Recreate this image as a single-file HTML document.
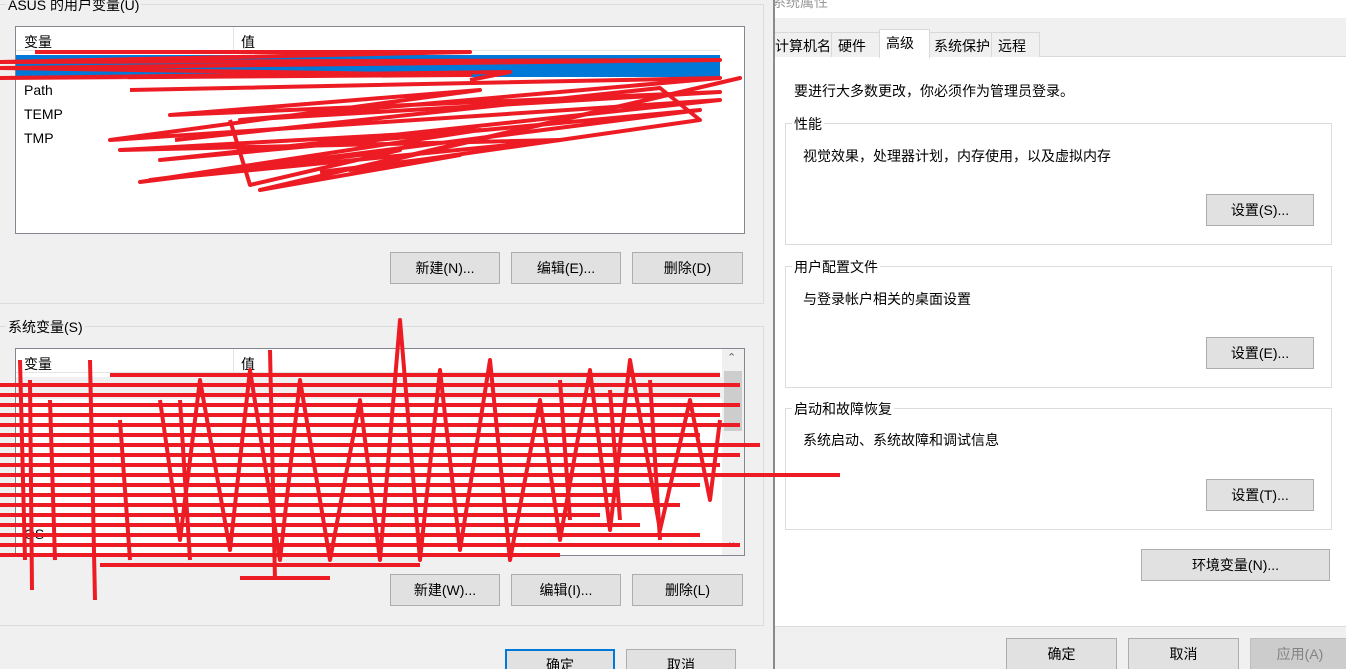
<!DOCTYPE html>
<html style="overflow:hidden"><head><meta charset="utf-8"><style>
*{margin:0;padding:0;box-sizing:border-box}
html,body{width:1346px;height:669px;overflow:hidden}
body{background:#f0f0f0;position:relative;font-family:"Liberation Sans","Noto Sans CJK SC",sans-serif;font-size:14px;color:#000}
.a{position:absolute}
.btn{position:absolute;background:#e1e1e1;border:1px solid #adadad;text-align:center;font-size:14px;line-height:30px;height:32px}
.grp{position:absolute;border:1px solid #dcdcdc}
.lbl{position:absolute;background:inherit;padding:0 2px;font-size:14px;line-height:16px}
.list{position:absolute;background:#fff;border:1px solid #828790}
.t{position:absolute;font-size:14px;white-space:nowrap}
</style></head><body>
<div class="a" style="left:0;top:0;width:774px;height:669px;background:#f0f0f0"></div>
<div class="grp" style="left:-2px;top:4px;width:766px;height:300px"></div>
<div class="lbl" style="left:6px;top:-3px;background:#f0f0f0">ASUS 的用户变量(U)</div>
<div class="list" style="left:15px;top:26px;width:730px;height:208px">
 <div class="a" style="left:0;top:0;width:704px;height:24px;border-bottom:1px solid #e5e5e5"></div>
 <div class="a" style="left:217px;top:0;width:1px;height:24px;background:#e5e5e5"></div>
 <div class="t" style="left:8px;top:5px">变量</div><div class="t" style="left:225px;top:5px">值</div>
 <div class="a" style="left:0;top:28px;width:704px;height:22px;background:#0078d7"></div>
 <div class="t" style="left:8px;top:55px">Path</div>
 <div class="t" style="left:8px;top:79px">TEMP</div>
 <div class="t" style="left:8px;top:103px">TMP</div>
</div>
<div class="btn" style="left:390px;top:252px;width:110px">新建(N)...</div>
<div class="btn" style="left:511px;top:252px;width:110px">编辑(E)...</div>
<div class="btn" style="left:632px;top:252px;width:111px">删除(D)</div>

<div class="grp" style="left:-2px;top:326px;width:766px;height:300px"></div>
<div class="lbl" style="left:6px;top:319px;background:#f0f0f0">系统变量(S)</div>
<div class="list" style="left:15px;top:348px;width:730px;height:208px;overflow:hidden">
 <div class="a" style="left:0;top:0;width:704px;height:24px;border-bottom:1px solid #e5e5e5"></div>
 <div class="a" style="left:217px;top:0;width:1px;height:24px;background:#e5e5e5"></div>
 <div class="t" style="left:8px;top:5px">变量</div><div class="t" style="left:225px;top:5px">值</div>
 <div class="a" style="left:0;top:28px;width:706px;height:22px;background:#f0f0f0"></div>
 <div class="t" style="left:8px;top:177px">OS</div>
 <div class="a" style="left:706px;top:0;width:22px;height:206px;background:#f0f0f0"></div>
 <div class="a" style="left:708px;top:22px;width:18px;height:60px;background:#cdcdcd"></div>
 <div class="t" style="left:711px;top:2px;font-size:11px;color:#606060">⌃</div>
 <div class="t" style="left:711px;top:186px;font-size:11px;color:#606060">⌄</div>
</div>
<div class="btn" style="left:390px;top:574px;width:110px">新建(W)...</div>
<div class="btn" style="left:511px;top:574px;width:110px">编辑(I)...</div>
<div class="btn" style="left:632px;top:574px;width:111px">删除(L)</div>
<div class="btn" style="left:505px;top:649px;width:110px;border:2px solid #0078d7;line-height:28px;height:32px">确定</div>
<div class="btn" style="left:626px;top:649px;width:110px">取消</div>

<div class="a" style="left:773px;top:0;width:2px;height:669px;background:#8a8a8a"></div>
<div class="a" style="left:775px;top:0;width:571px;height:18px;background:#fff"></div>
<div class="t" style="left:772px;top:-8px;color:#999">系统属性</div>
<div class="a" style="left:775px;top:18px;width:571px;height:38px;background:#f0f0f0"></div>
<div class="a" style="left:775px;top:56px;width:571px;height:570px;background:#fff;border-top:1px solid #d9d9d9"></div>
<div class="a" style="left:775px;top:32px;width:57px;height:25px;border:1px solid #d9d9d9;border-left:none;border-bottom:none;background:#f0f0f0"></div>
<div class="t" style="left:775px;top:36px">计算机名</div>
<div class="a" style="left:832px;top:32px;width:48px;height:25px;border-right:1px solid #d9d9d9;border-top:1px solid #d9d9d9;background:#f0f0f0"></div>
<div class="t" style="left:838px;top:36px">硬件</div>
<div class="a" style="left:879px;top:29px;width:51px;height:29px;border:1px solid #d9d9d9;border-bottom:none;background:#fff"></div>
<div class="t" style="left:886px;top:33px">高级</div>
<div class="a" style="left:930px;top:32px;width:62px;height:25px;border-right:1px solid #d9d9d9;border-top:1px solid #d9d9d9;background:#f0f0f0"></div>
<div class="t" style="left:934px;top:36px">系统保护</div>
<div class="a" style="left:992px;top:32px;width:48px;height:25px;border-right:1px solid #d9d9d9;border-top:1px solid #d9d9d9;background:#f0f0f0"></div>
<div class="t" style="left:998px;top:36px">远程</div>

<div class="t" style="left:794px;top:81px">要进行大多数更改，你必须作为管理员登录。</div>
<div class="grp" style="left:785px;top:123px;width:547px;height:122px"></div>
<div class="lbl" style="left:792px;top:116px;background:#fff">性能</div>
<div class="t" style="left:803px;top:146px">视觉效果，处理器计划，内存使用，以及虚拟内存</div>
<div class="btn" style="left:1206px;top:194px;width:108px">设置(S)...</div>
<div class="grp" style="left:785px;top:266px;width:547px;height:122px"></div>
<div class="lbl" style="left:792px;top:259px;background:#fff">用户配置文件</div>
<div class="t" style="left:803px;top:289px">与登录帐户相关的桌面设置</div>
<div class="btn" style="left:1206px;top:337px;width:108px">设置(E)...</div>
<div class="grp" style="left:785px;top:408px;width:547px;height:122px"></div>
<div class="lbl" style="left:792px;top:401px;background:#fff">启动和故障恢复</div>
<div class="t" style="left:803px;top:430px">系统启动、系统故障和调试信息</div>
<div class="btn" style="left:1206px;top:479px;width:108px">设置(T)...</div>
<div class="btn" style="left:1141px;top:549px;width:189px">环境变量(N)...</div>
<div class="a" style="left:775px;top:626px;width:571px;height:43px;background:#f0f0f0;border-top:1px solid #dcdcdc"></div>
<div class="btn" style="left:1006px;top:638px;width:111px">确定</div>
<div class="btn" style="left:1128px;top:638px;width:111px">取消</div>
<div class="btn" style="left:1250px;top:638px;width:100px;background:#cccccc;border-color:#bfbfbf;color:#838383">应用(A)</div>

<svg class="a" style="left:0;top:0" width="1346" height="669" fill="none" stroke="#ed1c24" stroke-width="4" stroke-linejoin="round">
<path d="M35 52 L470 52 L0 62 L720 60 L0 68 L470 75 L0 78 L510 72 L470 80"/>
<path d="M130 90 L720 78 L240 120 L720 92 L170 115 L480 90 L110 140 L720 100 L160 160 L700 110 L150 180 L560 140 L120 150 L480 130 L140 182 L400 150 L250 185 L230 120"/>
<path d="M175 140 L660 88 L700 120 L350 170 L740 78 L260 190 L460 155 L320 172"/>
<path d="M110 375 L720 375 M0 385 L740 385 M0 395 L720 395 M0 405 L740 405 M0 415 L720 415 M0 425 L740 425 M0 435 L700 435 M0 445 L760 445 M0 455 L740 455 M0 465 L720 465 M0 475 L840 475 M0 485 L700 485 M0 495 L620 495 M0 505 L680 505 M0 515 L600 515 M0 525 L640 525 M0 535 L700 535 M0 545 L740 545 M0 555 L560 555 M100 565 L420 565 M240 578 L330 578"/>
<path d="M160 400 L180 540 L200 380 L230 550 L250 370 L280 560 L300 380 L330 560 L360 400 L380 560 L400 320 L420 560 L440 370 L460 550 L490 360 L510 560 L540 400 L560 540 L590 370 L610 530 L630 360 L660 530 L690 400 L710 500 L720 420"/>
<path d="M20 360 L25 560 M30 380 L32 590 M90 360 L95 600 M50 400 L55 560 M120 420 L130 560 M270 350 L275 580 M180 400 L190 560 M560 380 L570 520 M610 390 L620 520 M650 380 L660 540"/>
</svg>
</body></html>
